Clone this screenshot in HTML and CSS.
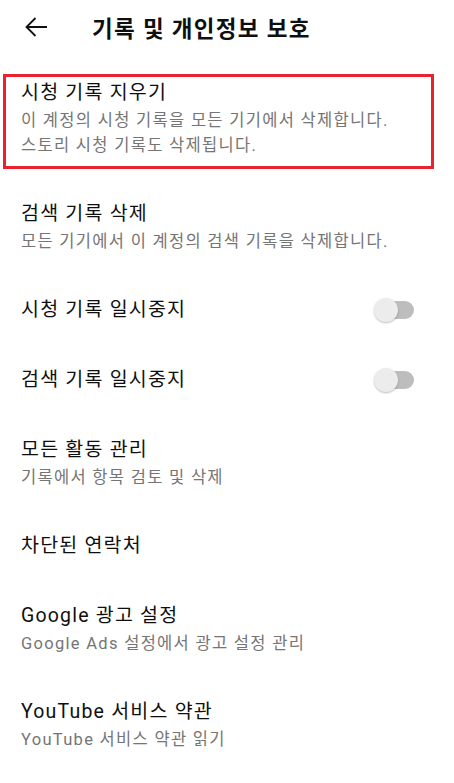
FILE: index.html
```html
<!DOCTYPE html>
<html lang="ko">
<head>
  <meta charset="UTF-8">
  <title>기록 및 개인정보 보호</title>
  <link rel="stylesheet" href="styles.css">
</head>
<body>

  <div class="top-bar">
    <svg class="back" width="24" height="22" viewBox="0 0 24 22">
      <path d="M23 11H2.5M11.5 2L2.5 11l9 9" fill="none" stroke="#111" stroke-width="1.8"/>
    </svg>
    <h1>기록 및 개인정보 보호</h1>
  </div>

  <div class="list">
    <div class="item marked">
      <div class="title">시청 기록 지우기</div>
      <div class="sub">이 계정의 시청 기록을 모든 기기에서 삭제합니다.<br>스토리 시청 기록도 삭제됩니다.</div>
    </div>
    <div class="item">
      <div class="title">검색 기록 삭제</div>
      <div class="sub">모든 기기에서 이 계정의 검색 기록을 삭제합니다.</div>
    </div>
    <div class="item row">
      <div class="title">시청 기록 일시중지</div>
      <div class="switch"><span class="knob"></span></div>
    </div>
    <div class="item row">
      <div class="title">검색 기록 일시중지</div>
      <div class="switch"><span class="knob"></span></div>
    </div>
    <div class="item">
      <div class="title">모든 활동 관리</div>
      <div class="sub">기록에서 항목 검토 및 삭제</div>
    </div>
    <div class="item">
      <div class="title">차단된 연락처</div>
    </div>
    <div class="item">
      <div class="title">Google 광고 설정</div>
      <div class="sub">Google Ads 설정에서 광고 설정 관리</div>
    </div>
    <div class="item">
      <div class="title">YouTube 서비스 약관</div>
      <div class="sub">YouTube 서비스 약관 읽기</div>
    </div>
  </div>

</body>
</html>
```

FILE: styles.css
```css
body {
  margin: 0;
  background: #fff;
  color: #0f0f0f;
  font-family: Roboto, "Noto Sans CJK KR", sans-serif;
}
.top-bar {
  height: 58px;
  display: flex;
  align-items: center;
}
.back {
  margin-left: 24px;
  margin-top: -4px;
}
h1 {
  margin: -4px 0 0 44px;
  font-size: 22.5px;
  font-weight: 700;
  letter-spacing: 1.3px;
}
.item {
  padding: 21px 21px;
}
.title {
  font-size: 19.5px;
  line-height: 28px;
  letter-spacing: 1.2px;
}
.sub {
  margin-top: 1px;
  font-size: 16.5px;
  line-height: 25px;
  letter-spacing: 1.3px;
  color: #757575;
}
.marked {
  position: relative;
}
.marked::after {
  content: "";
  position: absolute;
  top: 16px;
  left: 3px;
  width: 425px;
  height: 89px;
  border: 3px solid #e8222e;
}
.row {
  display: flex;
  align-items: center;
  justify-content: space-between;
  padding-right: 40px;
}
.switch {
  position: relative;
  width: 38px;
  height: 18px;
  border-radius: 9px;
  background: #bdbdbd;
}
.knob {
  position: absolute;
  left: -2px;
  top: -3px;
  width: 24px;
  height: 24px;
  border-radius: 50%;
  background: #ececec;
  box-shadow: 0 1px 2px rgba(0,0,0,0.25);
}
```
